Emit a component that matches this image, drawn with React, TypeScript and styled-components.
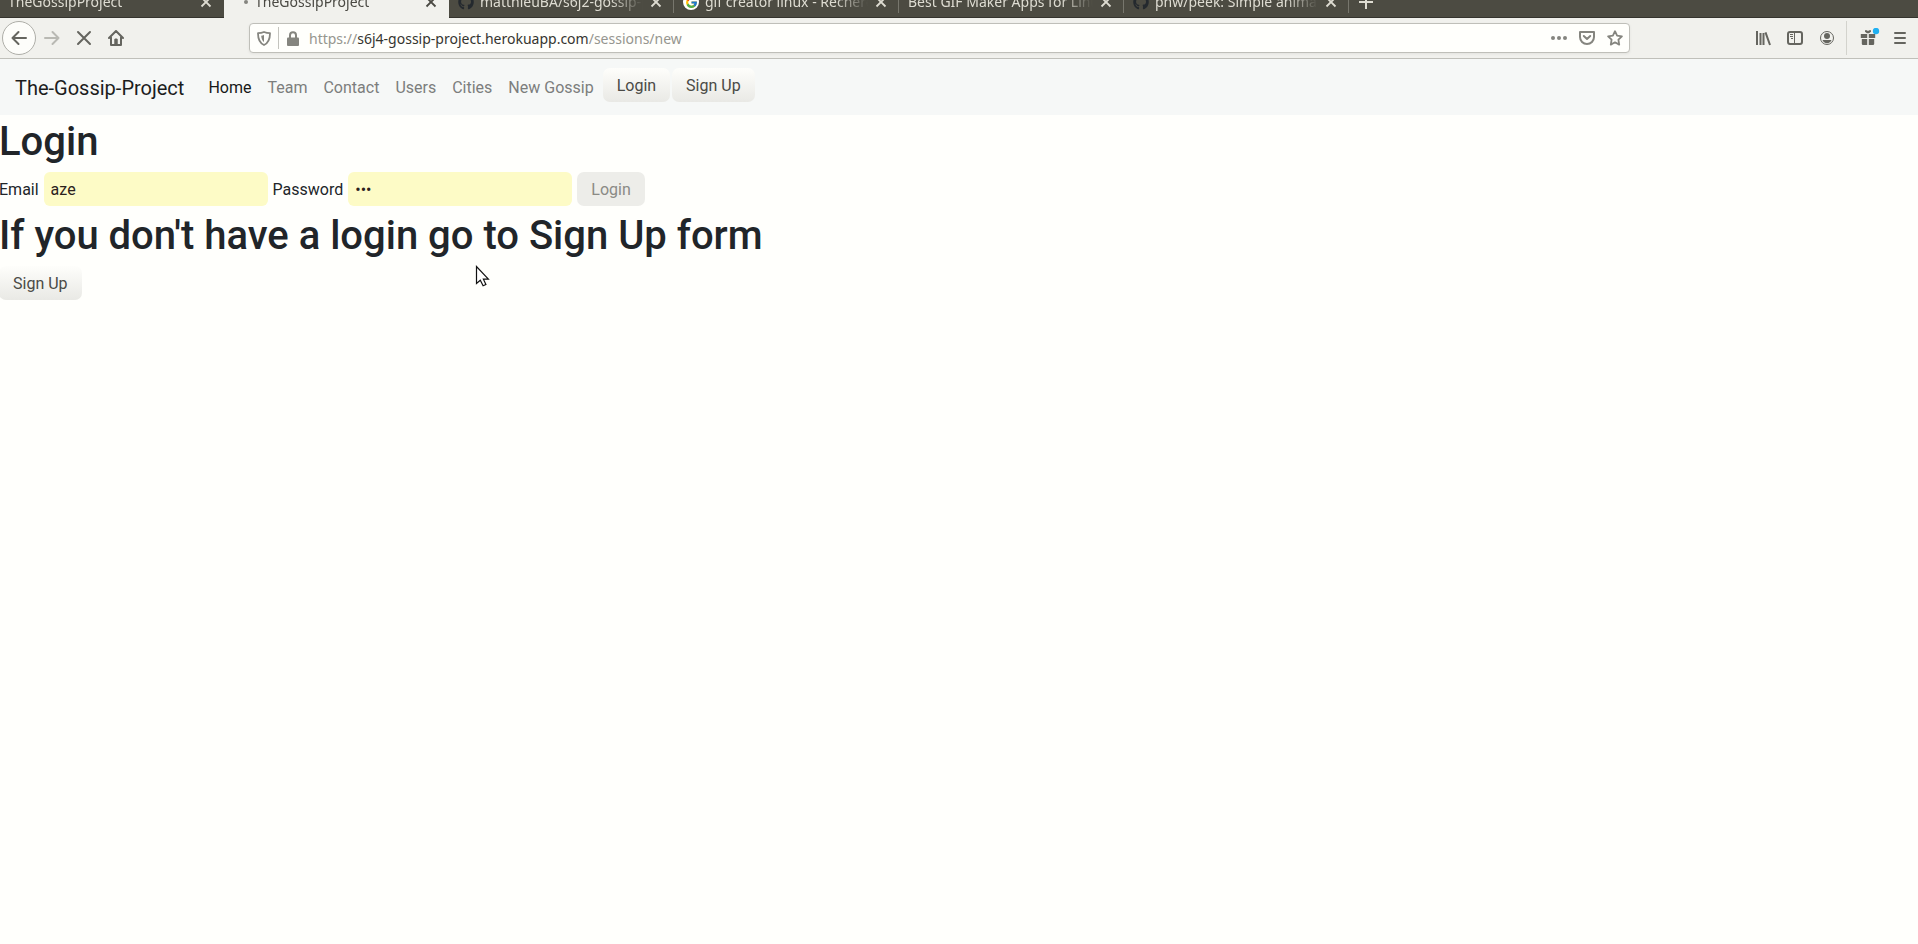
import React from "react";
import styled, { createGlobalStyle } from "styled-components";
import { FaGithub } from "react-icons/fa";
import { FcGoogle } from "react-icons/fc";

const GlobalStyle = createGlobalStyle`
  *, *::before, *::after { box-sizing: border-box; }
  body {
    margin: 0;
    background: #fffffc;
    color: #212529;
    font-family: Roboto, "Liberation Sans", sans-serif;
    font-size: 16px;
    line-height: 24px;
  }
`;

const Browser = styled.div`
  min-height: 100vh;
`;

const TabStrip = styled.div`
  display: flex;
  align-items: flex-end;
  height: 18px;
  margin-left: -1px;
  overflow: hidden;
  background: #4c4b42;
  box-shadow: inset 0 -1px #35342e;
  color: #dedcd2;
  font-family: "Noto Sans", "Open Sans", sans-serif;
  font-size: 14px;
`;

const Tab = styled.div<{ $selected?: boolean; $divider?: boolean }>`
  display: flex;
  flex: 0 1 225px;
  align-items: center;
  gap: 6px;
  min-width: 0;
  height: 32px;
  padding: 0 11px 0 9px;
  color: ${(p) => (p.$selected ? "#4a4943" : "inherit")};
  background: ${(p) =>
    p.$selected
      ? "#f1f1ed"
      : p.$divider
        ? "linear-gradient(#77766d, #77766d) right 0 top 0 / 1px 27px no-repeat"
        : "none"};
`;

const TabTitle = styled.span`
  flex: 1;
  overflow: hidden;
  white-space: nowrap;
  line-height: 20px;
  mask-image: linear-gradient(to left, transparent, #000 32px);
`;

const TabIcon = styled.span`
  display: flex;
  flex: none;
  align-items: center;
  justify-content: center;
  width: 16px;
  height: 16px;
  border-radius: 8px;
  color: #24292e;
`;

const GoogleBadge = styled(TabIcon)`
  background: #fff;
`;

const PlainButton = styled.button`
  display: flex;
  flex: none;
  align-items: center;
  justify-content: center;
  padding: 0;
  border: 0;
  background: none;
  color: inherit;
`;

const CloseButton = styled(PlainButton)`
  width: 14px;
  height: 20px;
`;

const NewTabButton = styled(PlainButton)`
  width: 34px;
  height: 32px;
`;

const Toolbar = styled.div`
  display: flex;
  align-items: center;
  height: 41px;
  padding: 0 2px;
  border-bottom: 1px solid #c0c0ba;
  background: #f1f1ed;
  color: #65655f;
`;

const ToolButton = styled(PlainButton)<{ $faded?: boolean }>`
  width: 32px;
  height: 32px;
  color: ${(p) => (p.$faded ? "#b9b9b3" : "inherit")};
`;

const BackButton = styled(ToolButton)`
  width: 34px;
  height: 34px;
  border: 1px solid #aeaea8;
  border-radius: 17px;
  background: #fdfdfa;
`;

const Spacer = styled.div`
  flex: 0 1 117px;
`;

const AddressBar = styled.div`
  display: flex;
  flex: 1;
  align-items: center;
  min-width: 0;
  height: 30px;
  border: 1px solid #bfbfb9;
  border-radius: 4px;
  background: #fffffc;
  box-shadow: 0 1px 3px #00000010;
  color: #85857f;
`;

const AddressButton = styled(PlainButton)`
  width: 28px;
  height: 28px;
`;

const AddressDivider = styled.span`
  width: 1px;
  height: 22px;
  background: #c4c4be;
`;

const Address = styled.div`
  flex: 1;
  padding: 2px 0 0 2px;
  overflow: hidden;
  white-space: nowrap;
  color: #96968f;
  font-family: "Noto Sans", "Open Sans", sans-serif;
  font-size: 14px;
`;

const Host = styled.span`
  color: #35352f;
`;

const ToolDivider = styled.span`
  width: 1px;
  height: 34px;
  margin: 0 5px 0 3px;
  background: #d3d3cd;
`;

const Navbar = styled.nav`
  display: flex;
  align-items: center;
  min-height: 56px;
  padding: 9px 15px 7px;
  background: #f6f8f7;
`;

const Brand = styled.a`
  margin-right: 16px;
  color: #1c1d1d;
  font-size: 20px;
  line-height: 30px;
  text-decoration: none;
`;

const NavLink = styled.a<{ $active?: boolean }>`
  padding: 8px;
  color: ${(p) => (p.$active ? "#171818" : "#7c7e7d")};
  text-decoration: none;
`;

const NavActions = styled.div`
  display: flex;
  align-self: flex-start;
  gap: 2px;
  margin-left: 1px;
`;

const PushButton = styled.button`
  height: 34px;
  padding: 1px 14px 0;
  border: 0;
  border-radius: 7px;
  background: linear-gradient(#fefefb, #e9e9e5);
  color: #4a4a46;
  font: inherit;

  &:disabled {
    background: #edede9;
    color: #8a8a85;
  }
`;

const Main = styled.main`
  margin-left: -1px;
  padding-top: 3px;
`;

const Heading = styled.h1`
  margin: 0 0 6px;
  font-size: 40px;
  font-weight: 500;
  line-height: 48px;
`;

const LoginForm = styled.form`
  display: flex;
  align-items: center;
  gap: 5px;
  padding-bottom: 6px;
`;

const FieldLabel = styled.label`
  padding-top: 1px;
`;

const Field = styled.input`
  width: 224px;
  height: 34px;
  padding: 1px 7px 0;
  border: 0;
  border-radius: 6px;
  outline: 0;
  background: #fdfbc6;
  color: #2b211c;
  font: inherit;
`;

const Pointer = styled.svg`
  position: absolute;
  top: 265px;
  left: 475px;
`;

function CloseIcon() {
  return (
    <svg width="12" height="12" viewBox="0 0 12 12" fill="none" stroke="currentColor" strokeWidth="1.8">
      <path d="M1.5 1.5l9 9M10.5 1.5l-9 9" />
    </svg>
  );
}

interface TabItem {
  title: string;
  icon?: React.ReactNode;
  selected?: boolean;
  divider?: boolean;
}

const github = (
  <TabIcon>
    <FaGithub size={16} />
  </TabIcon>
);

const tabs: TabItem[] = [
  { title: "TheGossipProject" },
  {
    title: "TheGossipProject",
    selected: true,
    icon: (
      <TabIcon>
        <svg width="16" height="16" viewBox="0 0 16 16">
          <circle cx="13" cy="8" r="2" fill="#85857f" />
        </svg>
      </TabIcon>
    ),
  },
  { title: "matthieuBA/s6j2-gossip-project", icon: github, divider: true },
  {
    title: "gif creator linux - Recherche Google",
    divider: true,
    icon: (
      <GoogleBadge>
        <FcGoogle size={13} />
      </GoogleBadge>
    ),
  },
  { title: "Best GIF Maker Apps for Linux", divider: true },
  { title: "phw/peek: Simple animated GIF", icon: github, divider: true },
];

const links = ["Home", "Team", "Contact", "Users", "Cities", "New Gossip"];

export default function App() {
  return (
    <Browser>
      <GlobalStyle />
      <TabStrip>
        {tabs.map((tab, index) => (
          <Tab key={index} $selected={tab.selected} $divider={tab.divider}>
            {tab.icon}
            <TabTitle>{tab.title}</TabTitle>
            <CloseButton aria-label="Close tab">
              <CloseIcon />
            </CloseButton>
          </Tab>
        ))}
        <NewTabButton aria-label="New tab">
          <svg width="14" height="14" viewBox="0 0 14 14" stroke="currentColor" strokeWidth="2">
            <path d="M0 7h14M7 0v14" />
          </svg>
        </NewTabButton>
      </TabStrip>

      <Toolbar>
        <BackButton aria-label="Back">
          <svg width="16" height="16" viewBox="0 0 16 16" fill="none" stroke="currentColor" strokeWidth="2" strokeLinecap="round" strokeLinejoin="round">
            <path d="M15 8H1.500M7.500 2l-6 6 6 6" />
          </svg>
        </BackButton>
        <ToolButton aria-label="Forward" $faded>
          <svg width="16" height="16" viewBox="0 0 16 16" fill="none" stroke="currentColor" strokeWidth="2" strokeLinecap="round" strokeLinejoin="round">
            <path d="M1 8h13.500M8.500 2l6 6-6 6" />
          </svg>
        </ToolButton>
        <ToolButton aria-label="Stop">
          <svg width="16" height="16" viewBox="0 0 16 16" fill="none" stroke="currentColor" strokeWidth="2" strokeLinecap="round">
            <path d="M2 2l12 12M14 2L2 14" />
          </svg>
        </ToolButton>
        <ToolButton aria-label="Home">
          <svg width="16" height="16" viewBox="0 0 16 16" fill="none" stroke="currentColor" strokeWidth="2" strokeLinecap="round" strokeLinejoin="round">
            <path d="M1 8l7-7 7 7M3 7.500V15h10V7.500" />
            <path d="M8 9v5M7 9.500h2V14H7z" strokeWidth="1.500" />
          </svg>
        </ToolButton>
        <Spacer />
        <AddressBar>
          <AddressButton aria-label="Tracking protection">
            <svg width="14" height="15" viewBox="0 0 14 15" fill="none" stroke="currentColor" strokeWidth="1.800" strokeLinejoin="round">
              <path d="M7 1c2 .9 4 1.200 6 1.200 0 5.800-1.300 9.600-6 11.800C2.300 11.800 1 8 1 2.200 3 2.200 5 1.900 7 1z" />
              <path d="M7 4v7C5.300 9.700 4.400 7.500 4.200 4.700 5.200 4.600 6.100 4.400 7 4z" fill="currentColor" stroke="none" />
            </svg>
          </AddressButton>
          <AddressDivider />
          <AddressButton aria-label="Site information">
            <svg width="12" height="15" viewBox="0 0 12 15">
              <path d="M3 7V4.200a3 3 0 016 0V7" fill="none" stroke="currentColor" strokeWidth="2" />
              <rect y="6.500" width="12" height="8.500" rx="1" fill="currentColor" />
            </svg>
          </AddressButton>
          <Address role="textbox" aria-label="Address">
            https://<Host>s6j4-gossip-project.herokuapp.com</Host>/sessions/new
          </Address>
          <AddressButton aria-label="Page actions">
            <svg width="16" height="4" viewBox="0 0 16 4" fill="currentColor">
              <circle cx="2" cy="2" r="2" />
              <circle cx="8" cy="2" r="2" />
              <circle cx="14" cy="2" r="2" />
            </svg>
          </AddressButton>
          <AddressButton aria-label="Save to Pocket">
            <svg width="16" height="14" viewBox="0 0 16 14" fill="none" stroke="currentColor" strokeWidth="2" strokeLinecap="round" strokeLinejoin="round">
              <path d="M1 1h14v5a7 7 0 01-14 0z" />
              <path d="M4.800 5L8 8l3.200-3" />
            </svg>
          </AddressButton>
          <AddressButton aria-label="Bookmark">
            <svg width="16" height="16" viewBox="0 0 16 16" fill="none" stroke="currentColor" strokeWidth="1.800" strokeLinejoin="round">
              <path d="M8 1.200l2.100 4.400 4.800.7-3.500 3.400.8 4.900L8 12.300l-4.200 2.300.8-4.900L1.100 6.300l4.800-.7z" />
            </svg>
          </AddressButton>
        </AddressBar>
        <Spacer />
        <ToolButton aria-label="Library">
          <svg width="16" height="16" viewBox="0 0 16 16" fill="none" stroke="currentColor" strokeWidth="2">
            <path d="M2 1v14M5.500 3v12M8.500 3v12M10.500 2.300L15 15" />
          </svg>
        </ToolButton>
        <ToolButton aria-label="Sidebar">
          <svg width="16" height="16" viewBox="0 0 16 16" fill="none" stroke="currentColor" strokeWidth="2">
            <rect x="1" y="2" width="14" height="12" rx="2" />
            <path d="M7.500 2v12" strokeWidth="1" />
            <path d="M3 4.500h3M3 6.500h3M4 8.500h2" strokeWidth="1" />
          </svg>
        </ToolButton>
        <ToolButton aria-label="Account">
          <svg width="16" height="16" viewBox="0 0 16 16">
            <circle cx="8" cy="8" r="6.500" fill="none" stroke="currentColor" />
            <circle cx="8" cy="6" r="3" fill="currentColor" />
            <path d="M3.500 10h9c-.5 2-2.400 3.200-4.500 3.200S4 12 3.500 10z" fill="currentColor" />
          </svg>
        </ToolButton>
        <ToolDivider />
        <ToolButton aria-label="What's new">
          <svg width="24" height="20" viewBox="-2 -1 24 20" fill="currentColor">
            <path d="M2.800 5h6.400v4H2.800zM10.800 5h6.400v4h-6.400zM3.800 10h5.400v6H5a1.200 1.200 0 01-1.200-1.200zM10.800 10h5.400v4.800A1.200 1.200 0 0115 16h-4.200zM7 1.200h2l1 1 1-1h2v1.600L11 4.300H9L7 2.800z" />
            <circle cx="18" cy="2" r="3.200" fill="#1fb0f2" />
          </svg>
        </ToolButton>
        <ToolButton aria-label="Menu">
          <svg width="12" height="14" viewBox="0 0 12 14" stroke="currentColor" strokeWidth="2" strokeLinecap="round">
            <path d="M1 2h10M1 7h10M1 12h10" />
          </svg>
        </ToolButton>
      </Toolbar>

      <Navbar>
        <Brand href="#">The-Gossip-Project</Brand>
        {links.map((link) => (
          <NavLink key={link} href="#" $active={link === "Home"}>
            {link}
          </NavLink>
        ))}
        <NavActions>
          <PushButton type="button">Login</PushButton>
          <PushButton type="button">Sign Up</PushButton>
        </NavActions>
      </Navbar>

      <Main>
        <Heading>Login</Heading>
        <LoginForm>
          <FieldLabel htmlFor="email">Email</FieldLabel>
          <Field id="email" type="text" defaultValue="aze" />
          <FieldLabel htmlFor="password">Password</FieldLabel>
          <Field id="password" type="password" defaultValue="aze" />
          <PushButton type="submit" disabled>
            Login
          </PushButton>
        </LoginForm>
        <Heading>If you don't have a login go to Sign Up form</Heading>
        <PushButton type="button">Sign Up</PushButton>
      </Main>

      <Pointer width="16" height="24" viewBox="0 0 16 24" aria-hidden="true">
        <path d="M1.500 1.500v17l3.800-3.300 2.800 5.500 2.800-1.200-2.500-5.300h5z" fill="#fff" stroke="#111" strokeWidth="1.200" />
      </Pointer>
    </Browser>
  );
}
